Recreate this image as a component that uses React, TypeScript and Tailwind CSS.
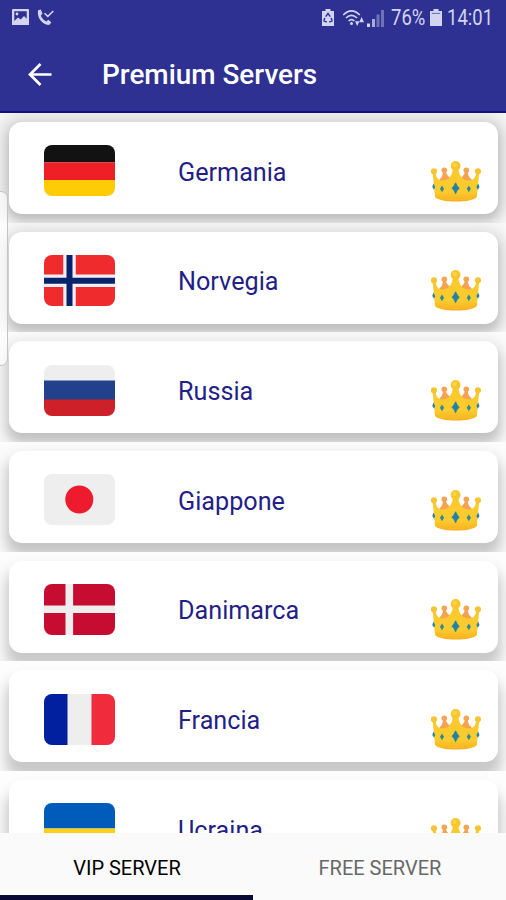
import type { ReactNode } from "react";

type Server = { name: string; flag: ReactNode; cell: string; shadow: string };

const Germany = (
  <>
    <rect width="71" height="17.3" fill="#121212" />
    <rect y="17.3" width="71" height="17.7" fill="#ee1f25" />
    <rect y="35" width="71" height="16" fill="#ffcb05" />
  </>
);
const Norway = (
  <>
    <rect width="71" height="51" fill="#ef2b2d" />
    <path d="M25.5 0V51M0 25.7H71" stroke="#f3eef2" strokeWidth="12.5" />
    <path d="M25.5 0V51M0 25.7H71" stroke="#06236b" strokeWidth="6" />
  </>
);
const Russia = (
  <>
    <rect width="71" height="16" fill="#eeeeee" />
    <rect y="15.5" width="71" height="19.5" fill="#22408c" />
    <rect y="34.5" width="71" height="17" fill="#ce2028" />
  </>
);
const Japan = (
  <>
    <rect width="71" height="51" fill="#eeeeee" />
    <circle cx="35.3" cy="25.5" r="14" fill="#ee1b2e" />
  </>
);
const Denmark = (
  <>
    <rect width="71" height="51" fill="#c60c30" />
    <path d="M25.3 0V51M0 25.3H71" stroke="#eeeeee" strokeWidth="7.6" />
  </>
);
const France = (
  <>
    <rect width="71" height="51" fill="#eeeeee" />
    <rect width="23.5" height="51" fill="#00209f" />
    <rect x="47.5" width="23.5" height="51" fill="#ef2b3c" />
  </>
);
const Ukraine = (
  <>
    <rect width="71" height="25.5" fill="#005bbb" />
    <rect y="25.5" width="71" height="25.5" fill="#fbd116" />
  </>
);

const servers: Server[] = [
  { name: "Germania", flag: Germany, cell: "bg-[#f7f8f7]", shadow: "shadow-[0_2px_16px_8px_rgba(0,0,0,0.14),0_5px_8px_1px_rgba(0,0,0,0.12)]" },
  { name: "Norvegia", flag: Norway, cell: "bg-[#f9f9f9]", shadow: "shadow-[0_5px_16px_7px_rgba(0,0,0,0.14),0_7px_8px_1px_rgba(0,0,0,0.11)]" },
  { name: "Russia", flag: Russia, cell: "bg-[#fbfbfb]", shadow: "shadow-[0_8px_16px_6px_rgba(0,0,0,0.14),0_8px_8px_1px_rgba(0,0,0,0.10)]" },
  { name: "Giappone", flag: Japan, cell: "bg-[#fcfcfc]", shadow: "shadow-[0_11px_16px_6px_rgba(0,0,0,0.14),0_9px_8px_1px_rgba(0,0,0,0.09)]" },
  { name: "Danimarca", flag: Denmark, cell: "bg-[#fdfdfd]", shadow: "shadow-[0_13px_16px_6px_rgba(0,0,0,0.14),0_10px_8px_1px_rgba(0,0,0,0.08)]" },
  { name: "Francia", flag: France, cell: "bg-[#fdfdfd]", shadow: "shadow-[0_15px_16px_6px_rgba(0,0,0,0.14),0_11px_8px_1px_rgba(0,0,0,0.08)]" },
  { name: "Ucraina", flag: Ukraine, cell: "bg-[#fdfdfd]", shadow: "shadow-[0_17px_16px_6px_rgba(0,0,0,0.14),0_12px_8px_1px_rgba(0,0,0,0.08)]" },
];

function Crown() {
  return (
    <svg className="h-[41px] w-[50px] shrink-0" viewBox="0 0 50 41">
      <defs>
        <linearGradient id="gold" x1="0" y1="0" x2="0" y2="1">
          <stop offset="0" stopColor="#f9c92d" />
          <stop offset="0.7" stopColor="#fdcb2e" />
          <stop offset="1" stopColor="#f5ae22" />
        </linearGradient>
      </defs>
      <path d="M5 24 9 18Q12 15 12 10H14.6Q15.2 14.5 20 17L22 26ZM44 24 40.2 18Q36.8 15 36.6 10H34Q33.8 14.5 29 17L27 26Z" fill="#f6a251" />
      <circle cx="13.3" cy="9.2" r="2.8" fill="#f5a452" />
      <circle cx="35.3" cy="9.2" r="2.8" fill="#f5a452" />
      <path
        d="M1.6 11.5H4.6C5.1 16.5 7.2 19.4 11 19.4 16.8 19.4 20.8 16 21.9 8H27.3C28.4 16 32.4 19.4 38 19.4 42.4 19.4 44.6 16.5 45.2 11.5H48.2L45.9 35.5C44 42.3 6 42.3 4 35.5Z"
        fill="url(#gold)"
      />
      <path d="M4.4 34.5C8 40 42 40 45.6 34.5" fill="none" stroke="#fbbb22" strokeWidth="1.2" />
      <circle cx="24.6" cy="4.9" r="4.9" fill="#f8c62b" />
      <circle cx="23.6" cy="4" r="2.2" fill="#fbd34b" />
      <circle cx="2.9" cy="10.3" r="3.1" fill="#f6c431" />
      <circle cx="47" cy="10.3" r="3.1" fill="#f6c431" />
      <path d="M24.6 21.8Q26 25.2 28.2 27.2 26 29 24.6 32.8 23.2 29 21 27.2 23.2 25.2 24.6 21.8Z" fill="#1f83a6" stroke="#1f83a6" strokeWidth="0.8" />
      <path d="M11 24.4 13.1 27.8 11 31.2 8.9 27.8ZM37.8 24.4 39.9 27.8 37.8 31.2 35.7 27.8Z" fill="#2b8c9b" />
      <path d="M2.4 22.5 4.2 26 3 28.8 1.3 26ZM47.3 22.5 48.5 26 46.8 28.8 45.4 26Z" fill="#2484a8" />
    </svg>
  );
}

function StatusBar() {
  return (
    <div className="flex h-[35px] items-center pl-[12px] text-[#d3d4f0]">
      <svg className="h-[17px] w-[17px]" viewBox="0 0 17 17">
        <path
          fillRule="evenodd"
          fill="currentColor"
          d="M1 0H16Q17 0 17 1V16H0V1Q0 0 1 0ZM2.3 2.3V12L6 8.4 8.7 10.6 12 7 14.7 9.8V2.3Z"
        />
        <circle cx="5" cy="5" r="1.4" fill="currentColor" />
      </svg>
      <svg className="ml-[8px] h-[17px] w-[17px]" viewBox="0 0 17 17" fill="none" stroke="currentColor">
        <path
          d="M1.2 1.2 3.8.5 5.5 4.8 3.8 6.4C4.8 9.2 6.8 11.2 9.5 12.4L11.2 10.8 14.3 13.2 12.6 15.8C6.2 17.2-.8 8.6 1.2 1.2Z"
          fill="currentColor"
          stroke="none"
        />
        <path d="M7.5 4.2 10.8 7.4 16.3 2" strokeWidth="1.5" />
      </svg>
      <svg className="ml-[268px] h-[17px] w-[12px]" viewBox="0 0 12 18" preserveAspectRatio="none">
        <path d="M3.5 0H8.5V2H12V18H0V2H3.5Z" fill="currentColor" />
        <path
          d="M3.7 8 6 4.7 8.3 8M9.2 9.5 10 12.6 7.2 13.8M4.8 13.8 2 12.6 2.8 9.5"
          fill="none"
          stroke="#2e3192"
          strokeWidth="1.5"
        />
      </svg>
      <svg className="ml-[8px] h-[18px] w-[23px]" viewBox="0 0 23 18" fill="none" stroke="currentColor" strokeWidth="1.7">
        <path d="M1.2 6Q9.5-2.2 17.8 6M4 9Q9.5 3.8 15 9M6.6 12Q9.5 9.3 12.4 12" />
        <circle cx="9.5" cy="14.5" r="1.5" fill="currentColor" stroke="none" />
        <path d="M13 12.3H17.4L15.2 17ZM17.2 13.2H22L19.6 8Z" fill="currentColor" stroke="none" />
      </svg>
      <svg className="ml-[2px] h-[18px] w-[17px]" viewBox="0 0 17 18" fill="currentColor">
        <path d="M0 14.5H3V18H0Z" />
        <path d="M5 10H8V18H5Z" opacity="0.75" />
        <path d="M9.5 5.5H12.5V18H9.5ZM14 1H17V18H14Z" opacity="0.4" />
      </svg>
      <span className="ml-[7px] w-[35px] origin-left scale-x-[0.84] text-[22px] leading-[35px]">76%</span>
      <svg className="ml-[4px] h-[17px] w-[12px]" viewBox="0 0 12 18" preserveAspectRatio="none">
        <path d="M3.5 0H8.5V2H12V18H0V2H3.5Z" fill="currentColor" />
        <path d="M1.8 4.7H10.2" stroke="#7476bb" strokeWidth="1.2" />
      </svg>
      <span className="ml-[5px] w-[46px] origin-left scale-x-[0.84] text-[22px] leading-[35px]">14:01</span>
    </div>
  );
}

export default function App() {
  return (
    <div className="relative flex h-[900px] w-[506px] flex-col overflow-hidden bg-white font-['Roboto',sans-serif]">
      <header className="h-[113px] shrink-0 border-b-2 border-[#150e7c] bg-[#2e3192]">
        <StatusBar />
        <div className="flex h-[78px] items-center pl-[28px]">
          <svg className="h-[23px] w-[24px]" viewBox="0 0 24 23" fill="none" stroke="#fff" strokeWidth="2.7">
            <path d="M23.5 11.5H2.5M12.5 1 2 11.5 12.5 22" />
          </svg>
          <h1 className="ml-[50px] pt-[2px] text-[27.9px] font-medium leading-[36px] text-white">Premium Servers</h1>
        </div>
      </header>

      <main className="min-h-0 flex-1 overflow-hidden">
        {servers.map((s) => (
          <section key={s.name} className={`h-[109.65px] overflow-hidden pl-[9px] pr-[8px] pt-[9px] ${s.cell}`}>
            <div className={`flex h-[92px] items-start rounded-[13px] bg-white pl-[35px] pr-[17px] ${s.shadow}`}>
              <svg className="mt-[23.4px] h-[51px] w-[71px] shrink-0 rounded-[8px]" viewBox="0 0 71 51" preserveAspectRatio="none">
                {s.flag}
              </svg>
              <span className="ml-[63px] mt-[32.7px] flex-1 text-[25.2px] leading-[36px] text-[#241f86]">{s.name}</span>
              <div className="pt-[38.6px]">
                <Crown />
              </div>
            </div>
          </section>
        ))}
      </main>

      <nav className="grid h-[67px] shrink-0 grid-cols-2 bg-[#fafafa] text-center text-[20px] leading-[56px]">
        <button className="h-[67px] border-b-[5px] border-[#080a35] pl-[1px] pt-[7px] text-black">VIP SERVER</button>
        <button className="h-[67px] border-b-[5px] border-transparent pl-[1px] pt-[7px] text-[#686868]">FREE SERVER</button>
      </nav>

      <div className="absolute left-[-10px] top-[191px] h-[175px] w-[18px] rounded-[7px] border border-[#c4c4c4] bg-white/65" />
    </div>
  );
}
